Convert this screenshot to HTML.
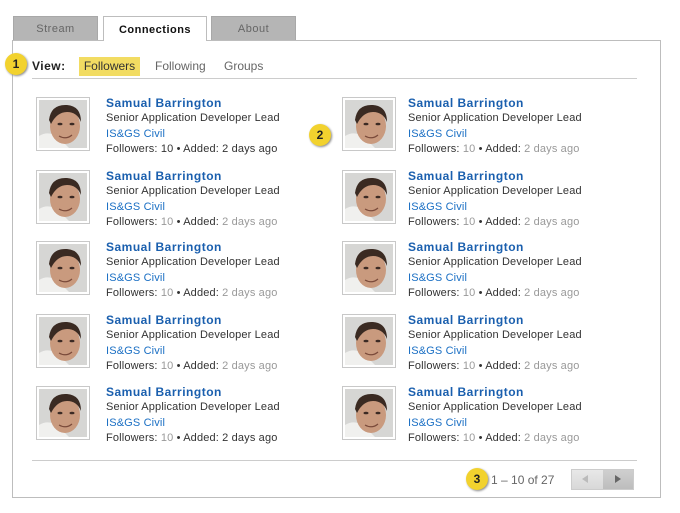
<!DOCTYPE html>
<html><head><style>
*{margin:0;padding:0;box-sizing:border-box}
body{width:680px;height:513px;background:#fff;font-family:"Liberation Sans",sans-serif;position:relative;overflow:hidden;color:#333}
.tab{position:absolute;top:16px;height:24px;background:#b5b5b5;border:1px solid #a8a8a8;border-bottom:none;text-align:center;font-size:11px;line-height:24px;color:#666;letter-spacing:.5px}
.panel{position:absolute;left:12px;top:40px;width:649px;height:458px;border:1px solid #bdbdbd}
.badge{position:absolute;width:22px;height:22px;border-radius:50%;background:#f2d22e;box-shadow:1px 1px 2px #888;font:bold 12px "Liberation Sans",sans-serif;text-align:center;line-height:22px;color:#222}
.item{position:absolute;width:260px;height:60px}
.ph{position:absolute;left:0;top:0;width:54px;height:54px;border:1px solid #c8c8c8;padding:2px;background:#fff}
.ph svg{display:block}
.tx{position:absolute;left:70px;top:-1px;font-size:11px;line-height:15.3px;letter-spacing:.15px;white-space:nowrap}
.nm{color:#1a5fae;font-weight:bold;font-size:12px;letter-spacing:.5px}
.dp{color:#1a6fc4}
.g{color:#999}
</style></head><body>
<div class="tab" style="left:13px;width:85px">Stream</div>
<div class="tab" style="left:103px;width:104px;top:16px;height:25px;background:#fff;border-color:#bdbdbd;color:#111;font-weight:bold;z-index:2;line-height:26px">Connections</div>
<div class="tab" style="left:211px;width:85px">About</div>
<div class="panel"></div>
<div class="badge" style="left:5px;top:53px">1</div>
<div style="position:absolute;left:32px;top:59px;font-size:12px;font-weight:bold;color:#222;letter-spacing:.5px">View:</div>
<div style="position:absolute;left:79px;top:57px;width:61px;height:19px;background:#f2dc62;font-size:12px;line-height:19px;text-align:center;color:#333">Followers</div>
<div style="position:absolute;left:155px;top:59px;font-size:12px;color:#666">Following</div>
<div style="position:absolute;left:224px;top:59px;font-size:12px;color:#666">Groups</div>
<div style="position:absolute;left:32px;top:78px;width:605px;height:1px;background:#ccc"></div>
<div class="badge" style="left:309px;top:124px">2</div>
<div style="position:absolute;left:32px;top:460px;width:605px;height:1px;background:#ccc"></div>
<div class="badge" style="left:466px;top:468px">3</div>
<div style="position:absolute;left:491px;top:473px;font-size:12px;color:#666">1 – 10 of 27</div>
<div style="position:absolute;left:571px;top:469px;width:63px;height:21px;border:1px solid #ccc;background:linear-gradient(#e8e8e8,#d8d8d8)"></div>
<div style="position:absolute;left:603px;top:470px;width:30px;height:19px;background:linear-gradient(#cfcfcf,#bdbdbd)"></div>
<div style="position:absolute;left:582px;top:475px;width:0;height:0;border:4px solid transparent;border-right:6px solid #bbb;border-left:none"></div>
<div style="position:absolute;left:615px;top:475px;width:0;height:0;border:4px solid transparent;border-left:6px solid #666;border-right:none"></div>

<svg width="0" height="0" style="position:absolute"><defs>
<symbol id="f" viewBox="0 0 48 48">
<rect width="48" height="48" fill="#d6d6d4"/>
<path d="M0 48 L0 36 Q10 30 20 38 L30 48Z" fill="#f0f0ee"/>
<ellipse cx="26" cy="26" rx="15" ry="18" fill="#c99a7e"/>
<path d="M10 20 Q12 4 28 5 Q42 6 42 22 Q38 12 28 12 Q18 12 12 24Z" fill="#3a2a22"/>
<ellipse cx="21" cy="24" rx="2.5" ry="1.3" fill="#3b2a24"/>
<ellipse cx="33" cy="24" rx="2.5" ry="1.3" fill="#3b2a24"/>
<path d="M20 36 Q27 40 33 35" stroke="#7a4a3a" stroke-width="1.2" fill="none"/>
</symbol></defs></svg>

<div class="item" style="left:36px;top:97px"><div class="ph"><svg width="48" height="48"><use href="#f"/></svg></div><div class="tx"><div class="nm">Samual Barrington</div>Senior Application Developer Lead<br><span class="dp">IS&amp;GS Civil</span><br>Followers: 10 • Added: 2 days ago</div></div>
<div class="item" style="left:36px;top:170px"><div class="ph"><svg width="48" height="48"><use href="#f"/></svg></div><div class="tx"><div class="nm">Samual Barrington</div>Senior Application Developer Lead<br><span class="dp">IS&amp;GS Civil</span><br>Followers: <span class="g">10</span> • Added: <span class="g">2 days ago</span></div></div>
<div class="item" style="left:36px;top:241px"><div class="ph"><svg width="48" height="48"><use href="#f"/></svg></div><div class="tx"><div class="nm">Samual Barrington</div>Senior Application Developer Lead<br><span class="dp">IS&amp;GS Civil</span><br>Followers: <span class="g">10</span> • Added: <span class="g">2 days ago</span></div></div>
<div class="item" style="left:36px;top:314px"><div class="ph"><svg width="48" height="48"><use href="#f"/></svg></div><div class="tx"><div class="nm">Samual Barrington</div>Senior Application Developer Lead<br><span class="dp">IS&amp;GS Civil</span><br>Followers: <span class="g">10</span> • Added: <span class="g">2 days ago</span></div></div>
<div class="item" style="left:36px;top:386px"><div class="ph"><svg width="48" height="48"><use href="#f"/></svg></div><div class="tx"><div class="nm">Samual Barrington</div>Senior Application Developer Lead<br><span class="dp">IS&amp;GS Civil</span><br>Followers: <span class="g">10</span> • Added: 2 days ago</div></div>
<div class="item" style="left:342px;top:97px"><div class="ph"><svg width="48" height="48"><use href="#f"/></svg></div><div class="tx" style="left:66px"><div class="nm">Samual Barrington</div>Senior Application Developer Lead<br><span class="dp">IS&amp;GS Civil</span><br>Followers: <span class="g">10</span> • Added: <span class="g">2 days ago</span></div></div>
<div class="item" style="left:342px;top:170px"><div class="ph"><svg width="48" height="48"><use href="#f"/></svg></div><div class="tx" style="left:66px"><div class="nm">Samual Barrington</div>Senior Application Developer Lead<br><span class="dp">IS&amp;GS Civil</span><br>Followers: <span class="g">10</span> • Added: <span class="g">2 days ago</span></div></div>
<div class="item" style="left:342px;top:241px"><div class="ph"><svg width="48" height="48"><use href="#f"/></svg></div><div class="tx" style="left:66px"><div class="nm">Samual Barrington</div>Senior Application Developer Lead<br><span class="dp">IS&amp;GS Civil</span><br>Followers: <span class="g">10</span> • Added: <span class="g">2 days ago</span></div></div>
<div class="item" style="left:342px;top:314px"><div class="ph"><svg width="48" height="48"><use href="#f"/></svg></div><div class="tx" style="left:66px"><div class="nm">Samual Barrington</div>Senior Application Developer Lead<br><span class="dp">IS&amp;GS Civil</span><br>Followers: <span class="g">10</span> • Added: <span class="g">2 days ago</span></div></div>
<div class="item" style="left:342px;top:386px"><div class="ph"><svg width="48" height="48"><use href="#f"/></svg></div><div class="tx" style="left:66px"><div class="nm">Samual Barrington</div>Senior Application Developer Lead<br><span class="dp">IS&amp;GS Civil</span><br>Followers: <span class="g">10</span> • Added: <span class="g">2 days ago</span></div></div>
</body></html>
